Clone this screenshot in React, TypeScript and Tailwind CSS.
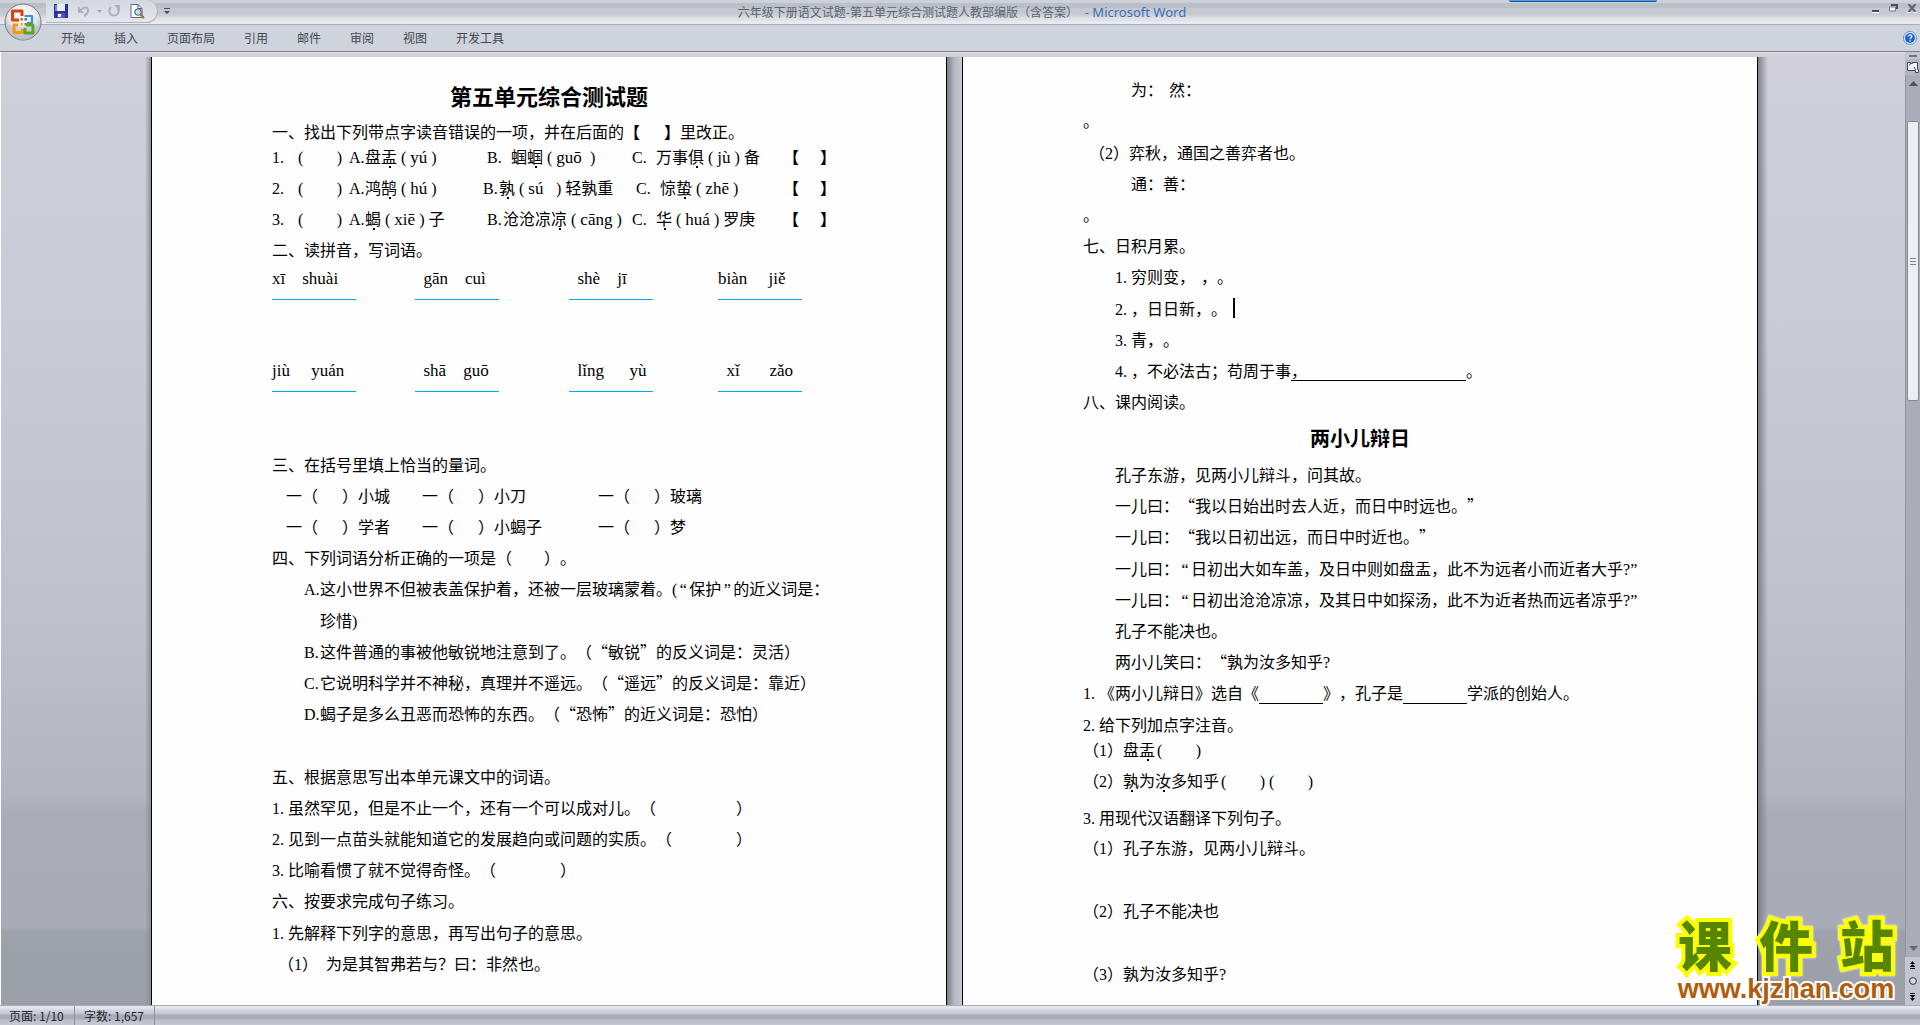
import React from 'react';
import clsx from 'clsx';

const TABS = ['开始', '插入', '页面布局', '引用', '邮件', '审阅', '视图', '开发工具'];

const PINYIN_ROWS = [
  ['xī    shuài', '  gān    cuì', '  shè    jī', 'biàn     jiě'],
  ['jiù     yuán', '  shā    guō', '  lǐng      yù', '  xǐ       zǎo'],
];

interface ChildrenProps {
  children: React.ReactNode;
}

interface LineProps {
  className?: string;
  children?: React.ReactNode;
}

// One paragraph line of the document
function Line({ className, children }: LineProps) {
  return <p className={clsx('min-h-[31px] whitespace-pre', className)}>{children}</p>;
}

// List label such as "1." or "A.", one full-width character wide
function Label({ children }: ChildrenProps) {
  return (
    <span className="inline-block w-4 leading-none font-['Liberation_Serif',serif]">{children}</span>
  );
}

function Latin({ children }: ChildrenProps) {
  return <span className="leading-none font-['Liberation_Serif',serif]">{children}</span>;
}

// Narrow quotation mark
function Quote({ children }: ChildrenProps) {
  return (
    <span className="inline-block w-3 text-center leading-none font-['Liberation_Serif',serif]">
      {children}
    </span>
  );
}

// Character with an emphasis dot below
function Dot({ children }: ChildrenProps) {
  return (
    <span className="relative after:absolute after:bottom-0 after:left-1/2 after:size-0.5 after:bg-black">
      {children}
    </span>
  );
}

function Pinyin({ children }: ChildrenProps) {
  return (
    <span className="leading-none font-['Liberation_Serif',serif]">
      <span className="px-1">(</span>
      <span className="text-[17px] leading-none">{children}</span>
      <span className="px-1">)</span>
    </span>
  );
}

// Narrow brackets with room for an answer
function Answer() {
  return (
    <span className="inline-flex w-12 justify-between px-0.5 leading-none font-['Liberation_Serif',serif]">
      <span>(</span>
      <span>)</span>
    </span>
  );
}

function Corner() {
  return (
    <span className="flex w-[53px] justify-between font-bold">
      <span>【</span>
      <span>】</span>
    </span>
  );
}

function Gap({ className }: { className: string }) {
  return <span className={clsx('inline-block', className)} />;
}

function Page({ children }: ChildrenProps) {
  return (
    <article className="w-[796px] shrink-0 overflow-hidden border-x border-black bg-[#fefefe] px-[120px] pt-[17px] leading-[31px]">
      {children}
    </article>
  );
}

function OfficeButton() {
  return (
    <button aria-label="Office" className="absolute top-[3px] left-1 size-[38px]">
      <svg viewBox="0 0 38 38" className="size-full">
        <defs>
          <radialGradient id="orb" cx="0.5" cy="0.3" r="0.7">
            <stop offset="0" stopColor="#ffffff" />
            <stop offset="0.6" stopColor="#e2e4e9" />
            <stop offset="1" stopColor="#a5a8b1" />
          </radialGradient>
        </defs>
        <circle cx="19" cy="19" r="18" fill="url(#orb)" stroke="#777b84" strokeWidth="1" />
        <path d="M3 21a16 16 0 0 0 32 0c-8 4-24 4-32 0z" fill="#c2c5cd" opacity=".6" />
        <g fill="none" strokeWidth="3" strokeLinejoin="round">
          <path d="M15 17H8.500V8H18v5" stroke="#d8430c" />
          <path d="M20.500 13H28v7h-5" stroke="#3d8fd6" strokeWidth="2.200" />
          <path d="M14 22h-4v7.500h8.500V26" stroke="#f59a0c" />
          <path d="M22 22h7v8h-8v-5" stroke="#5aa527" />
        </g>
        <g>
          <path d="M16.500 15h2.500v2.500h-2.500z" fill="#e8641b" />
          <path d="M20.500 15H23v2.500h-2.500z" fill="#2f7fcb" />
          <path d="M16.500 20h2.500v2.500h-2.500z" fill="#f8b119" />
          <path d="M20.500 20H23v2.500h-2.500z" fill="#58a82a" />
        </g>
      </svg>
    </button>
  );
}

function QuickAccess() {
  return (
    <div className="flex items-start pl-[46px]">
      <div className="flex h-[23px] w-[112px] items-center rounded-r-full border-r border-b border-[#b0b4be] bg-linear-to-b from-[#d3d7df] to-[#e4e6ec] pl-2">
        <button aria-label="保存" className="w-[23px]">
          <svg viewBox="0 0 14 14" className="size-3.5">
            <path d="M0 0h14v14H1L0 13z" fill="#2c2f9c" />
            <path d="M1 1h2v6H1z" fill="#6d86e0" />
            <path d="M3 0h8v7H3z" fill="#e9eefb" />
            <path d="M3 9h8v5H3z" fill="#4b58c0" />
            <path d="M4 10h3v3H4z" fill="#fff" />
          </svg>
        </button>
        <button aria-label="撤消" className="w-5">
          <svg viewBox="0 0 14 14" className="size-3.5">
            <path d="M4 6C7 2 12 3 11 7c-.400 2-2 4-4 5" fill="none" stroke="#adb1bb" strokeWidth="2" />
            <path d="M1 2v7h6z" fill="#adb1bb" />
          </svg>
        </button>
        <span className="w-2.5">
          <svg viewBox="0 0 5 3" className="h-[3px] w-[5px]"><path d="M0 0h5L2.500 3z" fill="#a3a7b0" /></svg>
        </span>
        <button aria-label="重复" className="w-[23px]">
          <svg viewBox="0 0 14 14" className="size-3.5">
            <path d="M4 3C1 6 2 11 6.500 11.500 11 12 13 7 10.500 4" fill="none" stroke="#adb1bb" strokeWidth="2" />
            <path d="M7 1h6v6z" fill="#adb1bb" />
          </svg>
        </button>
        <button aria-label="打印预览">
          <svg viewBox="0 0 15 15" className="size-[15px]">
            <path d="M1 .500h7l4 4v9H1z" fill="#fff" stroke="#5a6b8c" />
            <path d="M8 .500v4h4" fill="none" stroke="#5a6b8c" />
            <circle cx="8" cy="8" r="3.300" fill="#bfe0f0" stroke="#39506e" />
            <path d="M10.500 10.500l3.500 3.500" stroke="#b5651d" strokeWidth="2" />
          </svg>
        </button>
      </div>
      <button aria-label="自定义快速访问工具栏" className="mt-2 ml-1.5">
        <svg viewBox="0 0 6 6" className="block size-1.5"><path d="M0 0h6v1H0zM0 3h6L3 6z" fill="#4a4f59" /></svg>
      </button>
    </div>
  );
}

function WindowButtons() {
  return (
    <div className="flex items-start justify-end pt-1 pr-[3px]">
      <button aria-label="最小化" className="mr-2 w-2.5">
        <svg viewBox="0 0 10 9" className="block h-[9px] w-2.5"><path d="M1 6h7v2H1z" fill="#444b57" /><path d="M1 8h7v1H1z" fill="#fff" /></svg>
      </button>
      <button aria-label="还原" className="mr-[9px]">
        <svg viewBox="0 0 9 8" className="block h-2 w-[9px]">
          <path d="M2 0h7v5H7V2H2z" fill="#4c505e" />
          <path d="M.500 3h6v4h-6z" fill="#f2f2f8" stroke="#7a7aa5" />
        </svg>
      </button>
      <button aria-label="关闭">
        <svg viewBox="0 0 10 9" className="block h-[9px] w-2.5">
          <path d="M1.500 0L8.500 8M8.500 0L1.500 8" stroke="#5c5f72" strokeWidth="2" />
          <path d="M0 8.500h3.500M6.500 8.500H10" stroke="#fff" />
        </svg>
      </button>
    </div>
  );
}

function Header() {
  return (
    <header className="relative shrink-0 text-xs">
      <div className="grid h-6 grid-cols-[1fr_auto_1fr] bg-[linear-gradient(#cdd1da_0_3px,#bbbfc8_3px_8px,#c5c8d1_8px_13px,#d0d3db_16px,#dfe1e5_18px_21px,#e7eaf2_21px)]">
        <QuickAccess />
        <h1 className="pt-1 pl-1 leading-4 whitespace-pre text-[#59636f] font-['Noto_Sans_CJK_SC',sans-serif] [text-spacing-trim:space-all]">
          六年级下册语文试题-第五单元综合测试题人教部编版（含答案）
          <span className="text-[13px] leading-4 text-[#3a71b5] font-['Noto_Sans',sans-serif]">  - Microsoft Word</span>
        </h1>
        <WindowButtons />
      </div>
      <nav className="flex h-7 items-center gap-[29px] border-y border-t-[#a9adb7] border-b-[#7d818a] bg-[#cfd3dc] pr-[3px] pl-[61px] text-[#3f4853]">
        {TABS.map((tab) => (
          <button key={tab}>{tab}</button>
        ))}
        <button aria-label="帮助" className="ml-auto">
          <svg viewBox="0 0 14 14" className="block size-3.5">
            <circle cx="7" cy="7" r="6.500" fill="#e8f3fc" stroke="#5b9bc9" />
            <circle cx="7" cy="7" r="5" fill="#1c62d6" />
            <path d="M5.200 5.500c0-2.300 3.700-2.200 3.600 0C8.800 6.800 7 6.700 7 8.300" fill="none" stroke="#fff" strokeWidth="1.300" />
            <path d="M6.300 9.300h1.400v1.300H6.300z" fill="#fff" />
          </svg>
        </button>
      </nav>
      <OfficeButton />
      <div className="absolute top-0 right-[263px] h-0.5 w-[148px] rounded-b border-b border-[#1f4fa0] bg-[#4b9fe8]" />
    </header>
  );
}

function PageOne() {
  return (
    <Page>
      <h2 className="text-center text-[22px] leading-[42px] font-bold">第五单元综合测试题</h2>
      <Line>一、找出下列带点字读音错误的一项，并在后面的<b>【<Gap className="w-6" />】</b>里改正。</Line>
      <div className="-mt-1.5 grid grid-cols-[24px_53px_138px_145px_151px_auto] items-baseline whitespace-pre">
        <Label>1.</Label>
        <Answer />
        <p><Label>A.</Label>盘<Dot>盂</Dot><Pinyin>yú</Pinyin></p>
        <p><Label>B.</Label><Gap className="w-2" />蝈<Dot>蝈</Dot><Pinyin>guō </Pinyin></p>
        <p><Label>C.</Label><Gap className="w-2" />万事<Dot>俱</Dot><Pinyin>jù</Pinyin>备</p>
        <Corner />
        <Label>2.</Label>
        <Answer />
        <p><Label>A.</Label>鸿<Dot>鹄</Dot><Pinyin>hú</Pinyin></p>
        <p className="-ml-1"><Label>B.</Label><Dot>孰</Dot><Pinyin>sú  </Pinyin>轻孰重</p>
        <p className="pl-1"><Label>C.</Label><Gap className="w-2" />惊<Dot>蛰</Dot><Pinyin>zhē</Pinyin></p>
        <Corner />
        <Label>3.</Label>
        <Answer />
        <p><Label>A.</Label><Dot>蝎</Dot><Pinyin>xiē</Pinyin>子</p>
        <p><Label>B.</Label>沧沧凉<Dot>凉</Dot><Pinyin>cāng</Pinyin></p>
        <p><Label>C.</Label><Gap className="w-2" /><Dot>华</Dot><Pinyin>huá</Pinyin>罗庚</p>
        <Corner />
      </div>
      <Line>二、读拼音，写词语。</Line>
      {PINYIN_ROWS.map((row, i) => (
        <div key={i} className="-mr-2 grid h-[92px] grid-cols-[143px_154px_149px_84px]">
          {row.map((word) => (
            <div key={word}>
              <p className="text-[17px] leading-7 whitespace-pre font-['Liberation_Serif',serif]">{word}</p>
              <div className="mt-1.5 h-px w-[84px] bg-[#00a9f0]" />
            </div>
          ))}
        </div>
      ))}
      <Line>三、在括号里填上恰当的量词。</Line>
      <div className="grid grid-cols-[136px_176px_auto] pl-3.5">
        {['小城', '小刀', '玻璃', '学者', '小蝎子', '梦'].map((noun) => (
          <p key={noun}>一（<Gap className="w-6" />）{noun}</p>
        ))}
      </div>
      <Line>四、下列词语分析正确的一项是（<Gap className="w-8" />）。</Line>
      <Line className="-mr-4 pl-8">
        <Label>A.</Label>这小世界不但被表盖保护着，还被一层玻璃蒙着。<Latin>(</Latin><Quote>“</Quote>保护<Quote>”</Quote>的近义词是：
      </Line>
      <Line className="pl-12 leading-8">珍惜<Latin>)</Latin></Line>
      <Line className="pl-8"><Label>B.</Label>这件普通的事被他敏锐地注意到了。（“敏锐”的反义词是：灵活）</Line>
      <Line className="pl-8"><Label>C.</Label>它说明科学并不神秘，真理并不遥远。（“遥远”的反义词是：靠近）</Line>
      <Line className="pl-8"><Label>D.</Label>蝎子是多么丑恶而恐怖的东西。（“恐怖”的近义词是：恐怕）</Line>
      <Line className="h-8" />
      <Line>五、根据意思写出本单元课文中的词语。</Line>
      <Line><Label>1.</Label>虽然罕见，但是不止一个，还有一个可以成对儿。（<Gap className="w-20" />）</Line>
      <Line><Label>2.</Label>见到一点苗头就能知道它的发展趋向或问题的实质。（<Gap className="w-16" />）</Line>
      <Line><Label>3.</Label>比喻看惯了就不觉得奇怪。（<Gap className="w-16" />）</Line>
      <Line>六、按要求完成句子练习。</Line>
      <Line className="leading-8"><Label>1.</Label>先解释下列字的意思，再写出句子的意思。</Line>
      <Line className="pl-1.5">（<Latin>1</Latin>）<Gap className="w-2" />为是其智弗若与？曰：非然也。</Line>
    </Page>
  );
}

function PageTwo() {
  return (
    <Page>
      <Line className="pl-12">为：<Gap className="w-1.5" />然：</Line>
      <Line>。</Line>
      <Line className="pl-1.5 leading-8">（<Latin>2</Latin>）弈秋，通国之善弈者也。</Line>
      <Line className="pl-12">通：善：</Line>
      <Line>。</Line>
      <Line>七、日积月累。</Line>
      <Line className="pl-8"><Label>1.</Label>穷则变，<Gap className="w-1.5" />，。</Line>
      <Line className="flex items-center pl-8 leading-8">
        <span><Label>2.</Label>，日日新，。</span>
        <span className="ml-1.5 h-5 w-0.5 bg-black" />
      </Line>
      <Line className="pl-8"><Label>3.</Label>青，。</Line>
      <Line className="pl-8">
        <Label>4.</Label>，不必法古；苟周于事
        <span className="inline-block w-[175px] border-b border-black leading-5">，</span>。
      </Line>
      <Line>八、课内阅读。</Line>
      <h2 className="text-center text-xl leading-[42px] font-bold">两小儿辩日</h2>
      <div className="-mr-4 pl-8">
        <Line>孔子东游，见两小儿辩斗，问其故。</Line>
        <Line>一儿曰：“我以日始出时去人近，而日中时远也。”</Line>
        <Line>一儿曰：“我以日初出远，而日中时近也。”</Line>
        <Line className="leading-8">一儿曰：<Quote>“</Quote>日初出大如车盖，及日中则如盘盂，此不为远者小而近者大乎<Latin>?”</Latin></Line>
        <Line>一儿曰：<Quote>“</Quote>日初出沧沧凉凉，及其日中如探汤，此不为近者热而远者凉乎<Latin>?”</Latin></Line>
        <Line>孔子不能决也。</Line>
        <Line>两小儿笑曰：“孰为汝多知乎<Latin>?</Latin></Line>
      </div>
      <Line>
        <Label>1.</Label>《两小儿辩日》选自《<Gap className="h-2 w-16 border-b border-black align-text-bottom" />》，孔子是
        <Gap className="h-2 w-16 border-b border-black align-text-bottom" />学派的创始人。
      </Line>
      <Line className="leading-8"><Label>2.</Label>给下列加点字注音。</Line>
      <Line className="-mt-1.5">（<Latin>1</Latin>）盘<Dot>盂</Dot><Answer /></Line>
      <Line>（<Latin>2</Latin>）<Dot>孰</Dot>为<Dot>汝</Dot>多知乎<Answer /><Answer /></Line>
      <Line className="leading-[42px]"><Label>3.</Label>用现代汉语翻译下列句子。</Line>
      <Line className="-mt-1.5">（<Latin>1</Latin>）孔子东游，见两小儿辩斗。</Line>
      <Line className="h-8" />
      <Line>（<Latin>2</Latin>）孔子不能决也</Line>
      <Line className="h-8" />
      <Line>（<Latin>3</Latin>）孰为汝多知乎<Latin>?</Latin></Line>
    </Page>
  );
}

function ScrollBar() {
  return (
    <aside className="flex w-[15px] shrink-0 flex-col bg-[#c3c6d0]">
      <div className="flex h-[7px] items-center justify-center"><span className="h-0.5 w-2 bg-[#6d717a]" /></div>
      <button aria-label="标尺" className="flex h-4 items-center justify-center bg-[#b4b7c1]">
        <svg viewBox="0 0 12 12" className="size-3">
          <path d="M.500 1.500h3v1h2v-1h5v7h1v3h-3v-2h-8z" fill="#f4f0fa" stroke="#3d4963" />
          <path d="M3.500 2.500l-1 2M7 6l1.500 3" stroke="#3d4963" />
        </svg>
      </button>
      <div className="flex min-h-0 flex-1 flex-col items-center border-l border-[#8f939d] bg-[#aaadb7]">
        <button aria-label="向上滚动" className="py-1.5">
          <svg viewBox="0 0 9 5" className="block h-[5px] w-[9px]"><path d="M0 5h9L4.500 0z" fill="#4d525c" /></svg>
        </button>
        <div className="mt-[29px] flex h-[280px] w-3 flex-col items-center justify-center gap-0.5 rounded-xs border border-[#878b95] bg-[#eceef3]">
          <span className="h-px w-1.5 bg-[#80848e]" />
          <span className="h-px w-1.5 bg-[#80848e]" />
          <span className="h-px w-1.5 bg-[#80848e]" />
        </div>
        <button aria-label="向下滚动" className="mt-auto py-1.5">
          <svg viewBox="0 0 9 5" className="block h-[5px] w-[9px]"><path d="M0 0h9L4.500 5z" fill="#666b75" /></svg>
        </button>
      </div>
      <div className="flex h-12 flex-col items-center justify-around">
        <button aria-label="前一页">
          <svg viewBox="0 0 7 8" className="block h-2 w-[7px]"><path d="M3.500 0L6 3H1zM3.500 3L6.500 6H.500zM1 7h5v1H1z" fill="#111" /></svg>
        </button>
        <button aria-label="选择浏览对象">
          <svg viewBox="0 0 8 8" className="block size-2"><circle cx="4" cy="4" r="3.400" fill="#d8dae0" stroke="#333" /></svg>
        </button>
        <button aria-label="下一页">
          <svg viewBox="0 0 7 8" className="block h-2 w-[7px]"><path d="M1 0h5v1H1zM.500 2h6L3.500 5zM1 5h5L3.500 8z" fill="#111" /></svg>
        </button>
      </div>
    </aside>
  );
}

function SiteMark() {
  return (
    <div className="absolute right-5 bottom-[22px] w-[228px]">
      <div className="flex justify-between px-1.5 text-[54px] leading-[54px] font-black text-[#578500] drop-shadow-[0_0_1px_white] font-['Liberation_Sans','Noto_Sans_CJK_SC',sans-serif] [-webkit-text-stroke:8px_#fbff00] [paint-order:stroke_fill]">
        <span>课</span>
        <span>件</span>
        <span>站</span>
      </div>
      <a
        href="#"
        className="block text-center text-[27px] leading-7 font-bold text-[#b05c0c] font-['Liberation_Sans',sans-serif] [-webkit-text-stroke:4px_white] [paint-order:stroke_fill]"
      >
        www.kjzhan.com
      </a>
    </div>
  );
}

export default function App() {
  return (
    <div
      lang="zh-CN"
      className="relative flex h-screen flex-col overflow-hidden bg-[#cfd3dc] text-black font-['Noto_Sans_CJK_SC',sans-serif]"
    >
      <Header />
      <main className="flex min-h-0 flex-1 border-l border-white bg-[linear-gradient(#d1cfda_0,#d1cfda_27px,#cdd0d9_27px,#c8cbd5_300px,#bfc2cc_550px,#b3b6c0_740px,#aaadb7_760px,#a9acb6_875px,#9da1aa_880px,#9b9fa8)]">
        <div className="flex min-w-0 flex-1 justify-center overflow-hidden border-t border-[#dfe0e6] pt-1 pl-[3px] text-base [text-spacing-trim:space-all]">
          <div className="-ml-1.5 w-1.5 shrink-0 bg-linear-to-r from-transparent to-[#8b8f98]" />
          <PageOne />
          <div className="w-[15px] shrink-0 bg-linear-to-r from-[#7d8189] via-[#b5b8c1] to-[#c6c9d2]" />
          <PageTwo />
          <div className="-mr-2.5 w-2.5 shrink-0 bg-linear-to-r from-[#7d8189] to-transparent" />
        </div>
        <ScrollBar />
      </main>
      <footer className="flex h-5 shrink-0 items-stretch border-t border-[#a9adb5] bg-[linear-gradient(#e3e6ec_0_2px,#d3d6de_4px,#c3c6d0_8px,#aaadb7_9px_13px,#bdc0ca_14px,#c5c8d1)] text-xs leading-5 text-[#1f2732]">
        <span className="w-[75px] border-r border-[#8d919b] pl-[9px]">页面: 1/10</span>
        <span className="w-20 border-r border-[#8d919b] pl-[9px]">字数: 1,657</span>
      </footer>
      <SiteMark />
    </div>
  );
}
